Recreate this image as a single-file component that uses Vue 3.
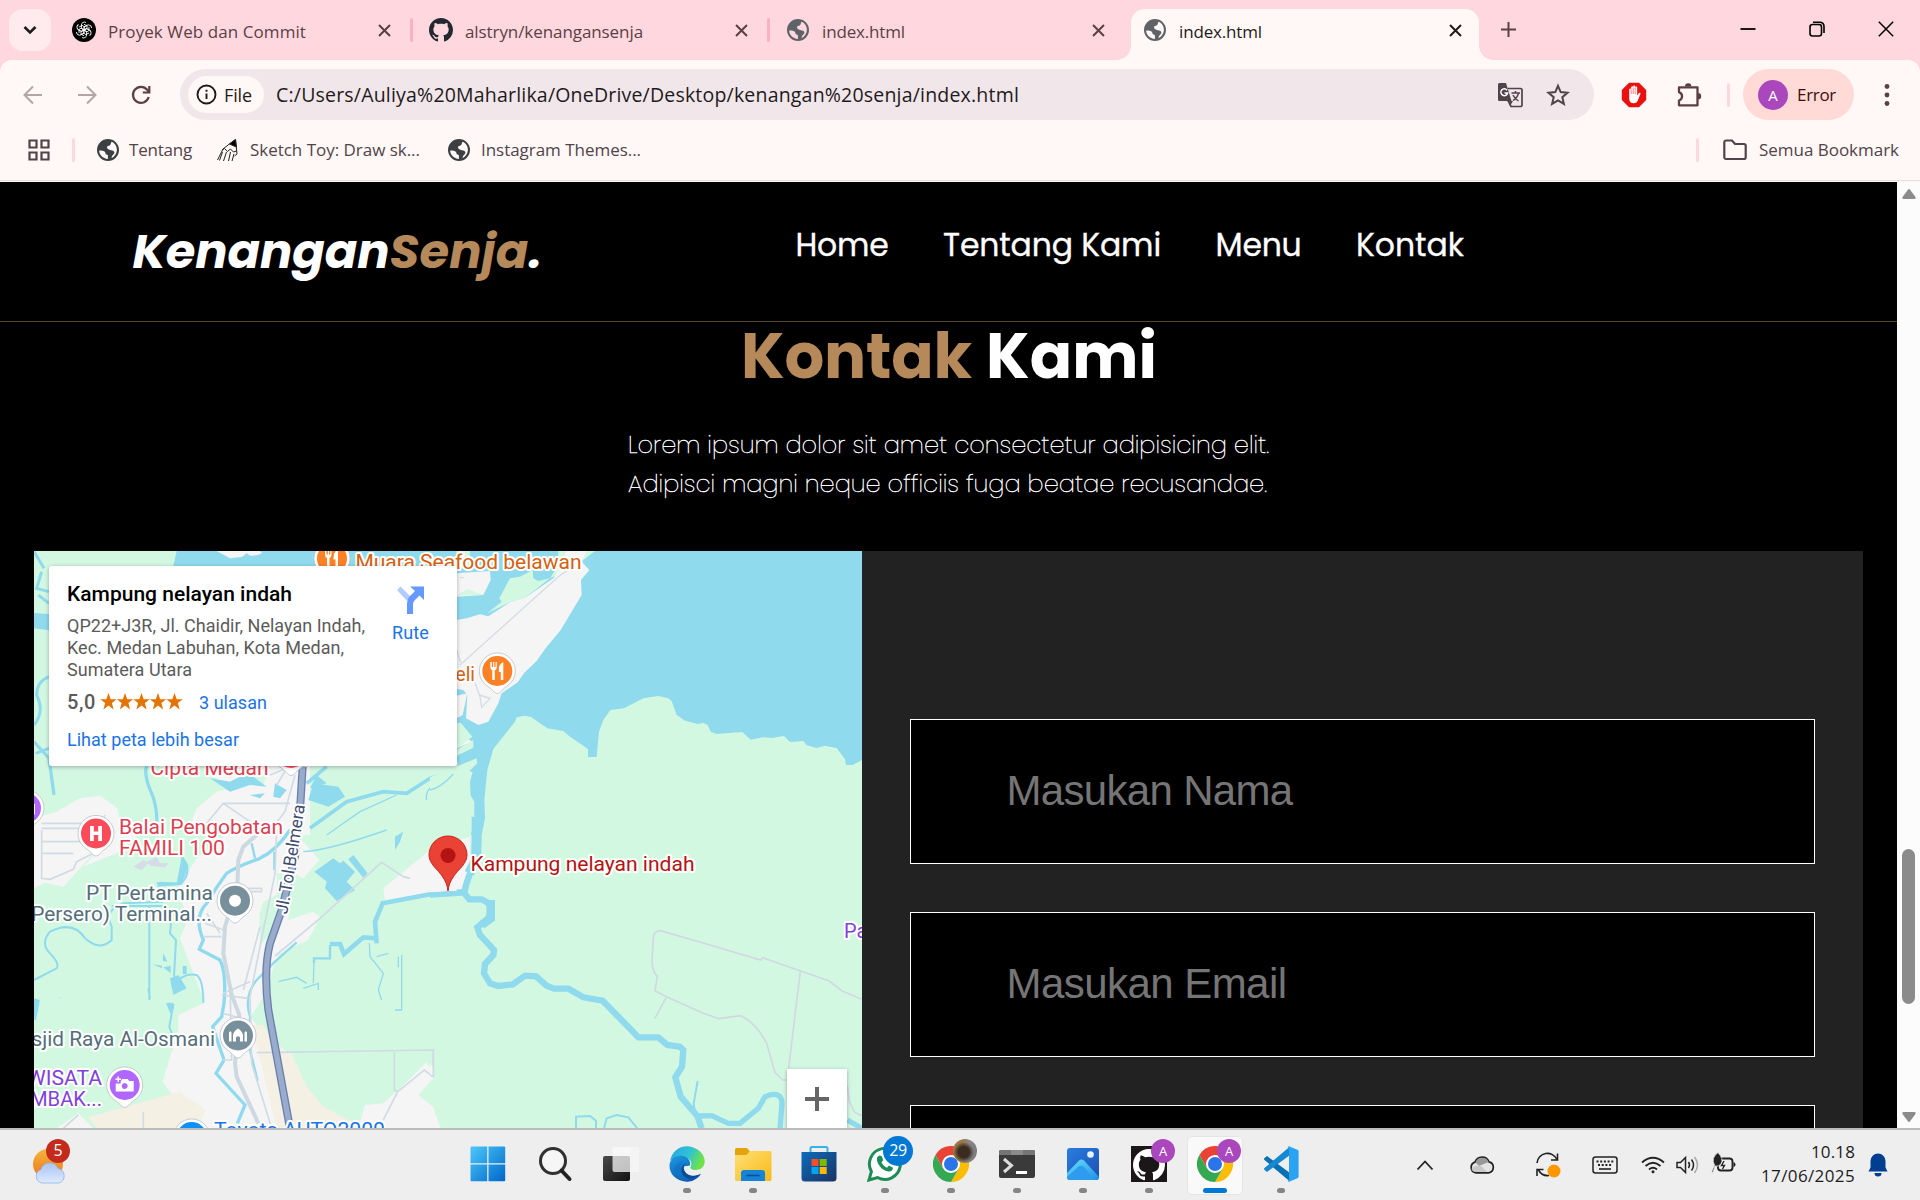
<script setup>
const tabs = [
  { icon: 'gpt', title: 'Proyek Web dan Commit', w: 198 },
  { icon: 'github', title: 'alstryn/kenangansenja', w: 178 },
  { icon: 'globe', title: 'index.html', w: 83 },
  { icon: 'globe', title: 'index.html', w: 83, active: true },
]

const links = [
  { label: 'Home', w: 93 },
  { label: 'Tentang Kami', w: 218 },
  { label: 'Menu', w: 86 },
  { label: 'Kontak', w: 108 },
]

const fields = ['Masukan Nama', 'Masukan Email', 'Masukan No HP']
const fieldWidths = [286, 280, 302]

const pins = [
  { x: 332, y: 558.5, color: '#ff8126', kind: 'food' },
  { x: 497.3, y: 671, color: '#ff8126', kind: 'food' },
  { x: 291, y: 753, color: '#fb4a59', kind: 'hospital' },
  { x: 26, y: 808, color: '#b066ff', kind: 'camera' },
  { x: 96, y: 833.5, color: '#fb4a59', kind: 'hospital' },
  { x: 235, y: 900.7, color: '#78909c', kind: 'dot' },
  { x: 238, y: 1035.5, color: '#78909c', kind: 'mosque' },
  { x: 124.7, y: 1085, color: '#b066ff', kind: 'camera' },
  { x: 191.7, y: 1137, color: '#0b90ff', kind: 'dot' },
]

const labels = [
  { t: 'Muara Seafood belawan', x: 355.5, y: 568.5, w: 226, c: '#d5610f' },
  { t: 'Deli', x: 443, y: 680.5, w: 32, c: '#d5610f' },
  { t: 'Cipta Medan', x: 150.5, y: 775, w: 118, c: '#dd3f51' },
  { t: 'Balai Pengobatan', x: 119, y: 833.5, w: 164, c: '#dd3f51' },
  { t: 'FAMILI 100', x: 119, y: 854.5, w: 106, c: '#dd3f51' },
  { t: 'PT Pertamina', x: 86, y: 900, w: 127, c: '#546e7a' },
  { t: '(Persero) Terminal...', x: 24, y: 921, w: 188, c: '#546e7a' },
  { t: 'Masjid Raya Al-Osmani', x: 2, y: 1045.5, w: 213, c: '#546e7a' },
  { t: 'WISATA', x: 27, y: 1085, w: 75, c: '#8241d8' },
  { t: 'MBAK...', x: 30, y: 1106, w: 72, c: '#8241d8' },
  { t: 'Toyota AUTO2000', x: 214, y: 1136.5, w: 171, c: '#1a73e8' },
  { t: 'Kampung nelayan indah', x: 470.5, y: 871, w: 224, c: '#b31412' },
  { t: 'Paluh', x: 844, y: 937.5, w: 50, c: '#8241d8' },
]

const apps = [
  { id: 'windows' },
  { id: 'search' },
  { id: 'taskview' },
  { id: 'edge', open: true },
  { id: 'explorer', open: true },
  { id: 'store' },
  { id: 'whatsapp', open: true, count: '29' },
  { id: 'chrome', open: true, badge: 'photo' },
  { id: 'terminal', open: true },
  { id: 'photos', open: true },
  { id: 'ghdesk', open: true, badge: 'A' },
  { id: 'chrome', active: true, badge: 'A' },
  { id: 'vscode', open: true },
]

const githubPath =
  'M8 0C3.58 0 0 3.58 0 8c0 3.54 2.29 6.53 5.47 7.59.4.07.55-.17.55-.38 0-.19-.01-.82-.01-1.49-2.01.37-2.53-.49-2.69-.94-.09-.23-.48-.94-.82-1.13-.28-.15-.68-.52-.01-.53.63-.01 1.08.58 1.23.82.72 1.21 1.87.87 2.33.66.07-.52.28-.87.51-1.07-1.78-.2-3.64-.89-3.64-3.95 0-.87.31-1.59.82-2.15-.08-.2-.36-1.02.08-2.12 0 0 .67-.21 2.2.82.64-.18 1.32-.27 2-.27s1.36.09 2 .27c1.53-1.04 2.2-.82 2.2-.82.44 1.1.16 1.92.08 2.12.51.56.82 1.27.82 2.15 0 3.07-1.87 3.75-3.65 3.95.29.25.54.73.54 1.48 0 1.07-.01 1.93-.01 2.2 0 .21.15.46.55.38A8.01 8.01 0 0 0 16 8c0-4.42-3.58-8-8-8z'
const globePath =
  'M12 1a11 11 0 1 0 0 22 11 11 0 0 0 0-22zM3.2 12.5c2.6 0 5 .1 5.8 1.4.7 1.100.1 2.300 1.600 2.600.9.2 1.400.5 1.300 1.700v2.700C6.900 20.600 3.300 17 3.200 12.500zM15.500 20.200c.5-1.200.2-2.300 1.200-3 1.300-.9 2.300-2.200 1.300-3.600-1-1.500-2.600-1-4-1.600-1.500-.7-3-1-3-2.700 0-1.400 1.600-1.500 2.600-1.900 1.400-.5.9-2 1.900-3.600 3.400 1.400 5.500 4.600 5.400 8.300-.1 3.600-2.300 6.600-5.400 8.100z'

/* Spreads the letters so that a line of text takes up the given width. */
const vFit = {
  mounted(el, { value }) {
    const n = el.textContent.length
    el.style.letterSpacing = `${(value - el.getBoundingClientRect().width) / n}px`
  },
}
</script>

<template>
  <div class="screen">
    <svg width="0" height="0" class="defs">
      <defs>
        <linearGradient id="gWin" x1="0" y1="0" x2="1" y2="1"><stop offset="0" stop-color="#4cc8fb" /><stop offset="1" stop-color="#0067c8" /></linearGradient>
        <linearGradient id="gEdgeA" x1="0" y1="0" x2="1" y2=".3"><stop offset="0" stop-color="#2aa5e0" /><stop offset=".6" stop-color="#30c3d3" /><stop offset="1" stop-color="#6fe24a" /></linearGradient>
        <linearGradient id="gEdgeB" x1="0" y1="0" x2=".6" y2="1"><stop offset="0" stop-color="#1b9de2" /><stop offset="1" stop-color="#0b56b0" /></linearGradient>
        <linearGradient id="gFolder" x1="0" y1="0" x2="1" y2="1"><stop offset="0" stop-color="#ffe076" /><stop offset="1" stop-color="#f9b917" /></linearGradient>
        <linearGradient id="gStore" x1="0" y1="0" x2="1" y2="1"><stop offset="0" stop-color="#0b6cbd" /><stop offset="1" stop-color="#1b3263" /></linearGradient>
        <linearGradient id="gPhoto" x1="0" y1="0" x2="1" y2="1"><stop offset="0" stop-color="#2a7de1" /><stop offset="1" stop-color="#1d4fb0" /></linearGradient>
        <linearGradient id="gHill" x1="0" y1="0" x2="1" y2="1"><stop offset="0" stop-color="#67e2fb" /><stop offset="1" stop-color="#1b8fe6" /></linearGradient>
        <linearGradient id="gSun" x1="0" y1="0" x2="0" y2="1"><stop offset="0" stop-color="#f4b63c" /><stop offset="1" stop-color="#f0731a" /></linearGradient>
        <linearGradient id="gCloud" x1="0" y1="0" x2="0" y2="1"><stop offset="0" stop-color="#a9c4f5" /><stop offset="1" stop-color="#dfeaff" /></linearGradient>
        <linearGradient id="gDark" x1="0" y1="0" x2="1" y2="1"><stop offset="0" stop-color="#4a4a4a" /><stop offset="1" stop-color="#111" /></linearGradient>
      </defs>
    </svg>

    <header class="chrome">
      <div class="strip">
        <div class="search-tabs">
          <svg width="14" height="10" viewBox="0 0 14 10"><path d="M1.500 2l5.500 5.500L12.500 2" fill="none" stroke="#1f1a1b" stroke-width="2.600" /></svg>
        </div>
        <div v-for="(t, i) in tabs" :key="i" class="tab" :class="{ active: t.active, bar: i < 2 }">
          <svg v-if="t.icon === 'gpt'" width="24" height="24" viewBox="-12 -12 24 24">
            <circle r="12" fill="#000" />
            <g fill="none" stroke="#fff" stroke-width=".9">
              <path v-for="k in 6" :key="k" :transform="`rotate(${k * 60})`" d="M-2.600-1.500V-5a3 3 0 0 1 4.600-2.500M-2.600-1.500L.2.100 3-1.500V-4L-.1-5.800" />
            </g>
          </svg>
          <svg v-else-if="t.icon === 'github'" width="24" height="24" viewBox="0 0 16 16"><path :d="githubPath" fill="#24292f" /></svg>
          <svg v-else width="24" height="24" viewBox="0 0 24 24"><path :d="globePath" fill="#5f6368" fill-rule="evenodd" /></svg>
          <span class="title"><span v-fit="t.w">{{ t.title }}</span></span>
          <svg class="x" width="13" height="13" viewBox="0 0 13 13"><path d="M1 1l11 11M12 1L1 12" stroke="currentColor" stroke-width="2" /></svg>
        </div>
        <svg class="plus" width="17" height="17" viewBox="0 0 17 17"><path d="M8.500 1v15M1 8.500h15" stroke="#5b3f44" stroke-width="2" /></svg>
        <div class="window">
          <svg width="16" height="16" viewBox="0 0 16 16"><path d="M.5 8h15" stroke="#000" stroke-width="1.800" /></svg>
          <svg width="16" height="16" viewBox="0 0 16 16" fill="none" stroke="#000" stroke-width="1.600"><rect x="1" y="3.500" width="11.500" height="11.500" rx="2.500" /><path d="M4 1.200h7a4 4 0 0 1 4 4V12" /></svg>
          <svg width="16" height="16" viewBox="0 0 16 16"><path d="M.8.8l14.400 14.400M15.200.8L.8 15.200" stroke="#000" stroke-width="1.500" /></svg>
        </div>
      </div>

      <div class="toolbar">
        <div class="nav-btns">
          <svg width="20" height="20" viewBox="0 0 20 20" fill="none" stroke="#b3a5a7" stroke-width="2"><path d="M19 10H2M10 1.500L1.500 10l8.500 8.500" /></svg>
          <svg width="20" height="20" viewBox="0 0 20 20" fill="none" stroke="#b3a5a7" stroke-width="2"><path d="M1 10h17M10 1.500l8.500 8.500-8.500 8.500" /></svg>
          <svg width="20" height="20" viewBox="0 0 20 20" fill="none" stroke="#5b3f44" stroke-width="2.200"><path d="M17.700 12a8 8 0 1 1-1.500-7.200L18 6.800" /><path d="M18.300 1v6.500h-6.500" /></svg>
        </div>
        <div class="omnibox">
          <div class="chip">
            <svg width="21" height="21" viewBox="0 0 21 21" fill="none" stroke="#1f1a1b" stroke-width="1.900"><circle cx="10.500" cy="10.500" r="9" /><path d="M10.500 9.500v5.500M10.500 5.800v2" /></svg>
            <span v-fit="28">File</span>
          </div>
          <span class="url"><span v-fit="743">C:/Users/Auliya%20Maharlika/OneDrive/Desktop/kenangan%20senja/index.html</span></span>
          <svg width="26" height="26" viewBox="0 0 26 26">
            <path d="M11 6.500h12.500a1.500 1.500 0 0 1 1.500 1.500v15a1.500 1.500 0 0 1-1.500 1.500H14l-3-6" fill="none" stroke="#51434a" stroke-width="1.700" />
            <path d="M2.500 1H9l5.500 18H2.500A1.500 1.500 0 0 1 1 17.500v-15A1.500 1.500 0 0 1 2.500 1zM12 19h4l-3 5z" fill="#51434a" />
            <path d="M10 8.200A3.400 3.400 0 1 0 10.600 11H7.500" fill="none" stroke="#fff" stroke-width="1.500" />
            <path d="M14.500 11H23M18.500 9v2M21.500 11c-.8 3.500-3 6-5.500 7.500M16 13c1 2.500 3 4.500 5.500 6" fill="none" stroke="#51434a" stroke-width="1.400" />
          </svg>
          <svg class="star" width="24" height="24" viewBox="0 0 24 24"><path d="M12 2.800l2.700 6.300 6.800.6-5.200 4.500 1.600 6.700-5.900-3.600-5.900 3.600 1.600-6.700-5.200-4.500 6.800-.6z" fill="none" stroke="#51434a" stroke-width="2" /></svg>
        </div>
        <svg class="ublock" width="26" height="26" viewBox="0 0 26 26">
          <path d="M8 .8h10L25.200 8v10L18 25.200H8L.8 18V8z" fill="#e8110f" />
          <path d="M8.200 13V7.500a1 1 0 0 1 2 0V5.300a1 1 0 0 1 2 0V4.500a1 1 0 0 1 2 0v1a1 1 0 0 1 2 0v8l1.500-2.300c.8-1 2.200-.4 1.700.7l-2.500 6.300c-.8 2-2 3-4.200 3-3 0-4.500-2-4.500-4.500z" fill="#fff" />
          <path d="M10.200 7.500V12M12.200 5.500V12M14.200 5.500V12" stroke="#e8110f" stroke-width=".5" />
        </svg>
        <svg class="puzzle" width="26" height="26" viewBox="0 0 26 26"><path d="M3 5.300h18.500v18H3v-4.800a4.400 4.400 0 0 0 0-8.400z" fill="none" stroke="#5b3f44" stroke-width="2.300" stroke-linejoin="round" /><path d="M9 4.500a3.200 3.200 0 0 1 6.400 0zM22 11a3.200 3.200 0 0 1 0 6.400z" fill="#5b3f44" /></svg>
        <i class="sep"></i>
        <div class="profile"><b>A</b><span v-fit="39">Error</span></div>
        <svg class="kebab" width="6" height="26" viewBox="0 0 6 26" fill="#5b3f44"><circle cx="3" cy="4.500" r="2.400" /><circle cx="3" cy="13" r="2.400" /><circle cx="3" cy="21.500" r="2.400" /></svg>
      </div>

      <div class="bookmarks">
        <svg class="apps" width="22" height="22" viewBox="0 0 22 22" fill="none" stroke="#51434a" stroke-width="2.200"><path d="M1.500 1.500h7v7h-7zM13.500 1.500h7v7h-7zM1.500 13.500h7v7h-7zM13.500 13.500h7v7h-7z" /></svg>
        <i class="sep"></i>
        <div class="bm b1"><svg width="24" height="24" viewBox="0 0 24 24"><path :d="globePath" fill="#3c4043" fill-rule="evenodd" /></svg><span v-fit="63">Tentang</span></div>
        <div class="bm b2">
          <svg width="24" height="24" viewBox="0 0 24 24" fill="none" stroke="#222" stroke-width="1"><path d="M19.500 1.500l1.500 14.500L18.500 18M18.500 2L7 11 1.500 22M6 12l2.500-1.500 3 3 3-2.500 3 3 3-1M6.500 14L3.500 22.500M10.500 14L7.500 23M14.500 14l-2 9M18 16l-2 7" /><path d="M19.500 1.500l.8 7.500-6.800-3z" fill="#000" /></svg>
          <span v-fit="170">Sketch Toy: Draw sk...</span>
        </div>
        <div class="bm b3"><svg width="24" height="24" viewBox="0 0 24 24"><path :d="globePath" fill="#3c4043" fill-rule="evenodd" /></svg><span v-fit="160">Instagram Themes...</span></div>
        <i class="sep right"></i>
        <div class="bm b4"><svg width="24" height="22" viewBox="0 0 24 22"><path d="M3 1.500h6l3 3.500h9a1.700 1.700 0 0 1 1.700 1.700v11.600A1.700 1.700 0 0 1 21 20H3a1.700 1.700 0 0 1-1.700-1.700V3.200A1.700 1.700 0 0 1 3 1.500z" fill="none" stroke="#51434a" stroke-width="2.200" /></svg><span v-fit="140">Semua Bookmark</span></div>
      </div>
    </header>

    <div class="view">
      <main class="page">
        <nav class="navbar">
          <a class="logo"><span v-fit="257">Kenangan</span><em v-fit="139">Senja</em><span>.</span></a>
          <div class="links"><a v-for="l in links" :key="l.label"><span v-fit="l.w">{{ l.label }}</span></a></div>
        </nav>
        <section class="contact">
          <h2><em v-fit="231">Kontak</em><span v-fit="171">Kami</span></h2>
          <p><span v-fit="641">Lorem ipsum dolor sit amet consectetur adipisicing elit.</span><br /><span v-fit="639">Adipisci magni neque officiis fuga beatae recusandae.</span></p>
          <div class="row">
            <div class="map">
              <svg width="828" height="577" viewBox="34 551 828 577">
                <rect x="34" y="551" width="828" height="577" fill="#d3f8e2" />
                <!-- north-west -->
                <g transform="translate(30 545) scale(.33333)">
                  <path d="M440 18H1320V663L1281 600V63H430zM12 204L57 207V256L12 250z" fill="#90daee" />
                  <path d="M560 18H690L700 28L600 40zM1281 80L1320 95V150L1281 155zM1281 235L1320 220V430L1290 400L1281 380z" fill="#f5f5f5" />
                  <path d="M620 55l30-25 20 12 30-15M12 20l30 50M35 80l-15 50 37 10M25 150l32 25M57 395Q20 410 20 450Q45 500 12 540M12 590L57 640M57 610l-40 15" stroke="#90daee" stroke-width="9" fill="none" />
                  <path d="M1281 560l39-30v40l-39 30zM1281 460l39 20" fill="#d3f8e2" />
                  <path d="M350 663Q340 690 365 745Q385 790 380 870M57 640l15 110" stroke="#90daee" stroke-width="10" fill="none" />
                  <path d="M545 690L640 690L700 720L720 663H840V870H470L500 790L560 740L600 730zM12 820L80 800L150 760L210 752L262 790L270 830L330 870H12z" fill="#f5f5f5" />
                  <path d="M540 700l60 10 40-20 30 5 40 30-50-5-60 20zM735 715l35 20-20 25-20-5zM690 760l-30-10 45-5zM850 715l75 10 20 30-50 30-60-20zM860 690l30 25-50 15z" fill="#90daee" />
                  <path d="M840 850L950 770L1060 740L1130 745L1200 700L1320 663M830 715L890 665" stroke="#90daee" stroke-width="11" fill="none" />
                  <path d="M890 870L990 800L1100 750M1250 690Q1180 730 1190 765" stroke="#90daee" stroke-width="4" fill="none" />
                  <path d="M580 775H780M580 775L500 870M580 775L660 830M795 690L765 800L710 870M720 690L770 670L740 720M35 835H160M35 850H150M35 865H140M225 810l-20 50" stroke="#d0dbe3" stroke-width="5" fill="none" />
                </g>
                <!-- north-east -->
                <g transform="translate(430 545) scale(.33333)">
                  <path d="M80 18H1296V870H123L80 640z" fill="#90daee" />
                  <path d="M80 18H120V70H80zM385 18H495L440 60L360 100L285 158L240 172L172 205L215 170L208 160L240 100L270 95L308 75L310 100L325 108L360 100L385 60z" fill="#d3f8e2" />
                  <path d="M80 85L180 78L182 105L160 150L80 155zM410 18H470L455 50L478 75L453 105L455 150L392 255L345 312L320 348L283 383L263 412L215 445L205 475L175 530L145 540L108 520L112 450L100 435L80 432V225L110 220L150 208L175 214L240 172L285 158L370 100L395 60z" fill="#f5f5f5" />
                  <path d="M80 152L112 132L160 150z" fill="#d3f8e2" />
                  <path d="M90 98H102M90 360L385 95L420 70M130 400L150 455L155 487L180 460L148 450M80 315L92 352" stroke="#d4dce6" stroke-width="4" fill="none" />
                  <path d="M80 452L112 445L98 510L80 520zM80 560L127 590L80 610z" fill="#f5f5f5" />
                  <path d="M155 870L165 820L163 765L172 675L190 612L255 530L260 517L285 512L303 516L352 550L400 558L420 575L474 612V636H500L507 560L520 525L541 495L582 490L640 460L685 453L715 460L725 468L740 510L765 527L803 537L820 534L833 540L842 560L860 567L937 561L962 584L1000 577L1025 579L1062 573L1080 591L1120 588L1130 601L1160 609L1185 602L1220 609L1245 643L1248 660H1268L1296 645V870zM80 533H92L127 575L88 605L80 600zM130 585V608L80 632V615zM0 697L140 640L142 655L118 678L128 682L120 710L122 752L133 770V815L123 870H0z" fill="#d3f8e2" />
                  <path d="M0 735Q30 730 70 687" stroke="#90daee" stroke-width="4" fill="none" />
                </g>
                <!-- south-west -->
                <g transform="translate(30 830) scale(.33333)">
                  <path d="M12 0H260L200 60L100 170L45 158L12 175zM260 0H340L270 65L160 110zM500 85L600 0H790L868 90L820 145L790 130L775 200V270L850 245L870 262L835 330L745 372L700 500L662 560L690 600L760 895H500L398 755L445 600V555L525 518L490 430L450 325L475 265L440 180zM1060 175L1200 60L1320 20V100L1290 185L1200 190L1065 210zM1190 697L1213 740L1165 795L1210 832L1232 895H985L1005 825L1060 820L1105 780zM80 895L145 850L190 895z" fill="#f5f5f5" />
                  <path d="M770 130L745 290L690 345L688 255L700 215L740 195V130z" fill="#d3f8e2" />
                  <path d="M175 862L450 785L528 840L500 895H200zM665 585H700L735 640L785 672L830 770L880 830L960 872L1000 895H740z" fill="#f5f0e4" />
                  <path d="M780 0Q740 60 690 85Q620 110 590 130Q560 170 530 220Q490 260 520 330L508 358L570 390Q590 430 582 520L575 560L548 590L582 690L558 730L645 825L622 880" stroke="#90daee" stroke-width="10" fill="none" />
                  <path d="M665 40L675 85M733 65V120M800 337L735 395L680 450Q640 500 660 560V660L683 752" stroke="#90daee" stroke-width="7" fill="none" />
                  <path d="M455 80Q490 120 455 160H380M12 450L80 415Q90 400 60 370Q30 340 60 305Q130 270 165 325Q210 365 245 330V290Q220 240 280 220L400 215M425 260L420 310L438 330L432 440M425 470Q460 425 500 435Q520 450 520 518M358 230V510M355 475l5 30M415 520L430 525L418 590L425 610M12 515L25 520L15 570M245 228H400" stroke="#90daee" stroke-width="6" fill="none" />
                  <path d="M455 80l20 25-20 60-75 5 10-15 50 5zM420 445l25-10 25 40-40 20zM408 520l22-2-8 35zM400 370l12 25-14-3zM366 402l30 5v8zM458 408h12v24h-12zM400 412l22-4v22zM12 505l18 5-18 55z" fill="#90daee" />
                  <path d="M853 125L910 85L930 100L940 92L975 125L950 155L975 180L920 213L885 175L890 155zM955 88L970 75L1013 130L1000 143zM1095 20l25-15-10 30-15 25z" fill="#90daee" />
                  <path d="M820 475l45-15v20M852 385L850 460M1018 340L1020 380L1060 430L1045 480L1055 510M1115 375V540H1095M1105 380V412M745 455L800 442L830 460M1040 380L1075 370M820 65Q900 60 1070 0" stroke="#90daee" stroke-width="4" fill="none" />
                  <path d="M1288 189L1200 193L1058 220L1035 275L1040 340M1040 325L1000 322L942 372L930 342L900 342" stroke="#90daee" stroke-width="14" fill="none" />
                  <path d="M900 345V385H852V400" stroke="#90daee" stroke-width="7" fill="none" />
                  <path d="M870 265L1055 97L1120 140L1140 145M735 378L870 265M580 490L660 455M575 495L655 505M580 550L650 570M680 668L1210 660V740L1183 720L1103 785L1060 870M1093 665V780L1103 785M690 290L640 480M740 0L735 130L700 300L660 500L665 700L725 895M600 460L605 690H580M35 0V145L60 148L130 118L140 95L190 70M35 35H160M35 70H130M530 250L570 310M525 280L580 300M520 320H575M610 175H695V185H620M100 895L145 855M340 845V895" stroke="#d0dbe3" stroke-width="5" fill="none" />
                  <path d="M310 110l30-20 15 10-20 20zM350 95l30-15 10 20h25l-10 12-45-5zM80 503q10-4 18 2" fill="#d6dbe8" />
                  <path d="M680 15L640 50L625 90L622 170L585 290L580 370L605 495L628 555L615 700L620 740L685 880" stroke="#ccd9e1" stroke-width="12" fill="none" />
                  <path d="M818-190L810-60L795 80L755 240L720 340Q700 420 715 540L780 895" stroke="#6b7fae" stroke-width="24" fill="none" />
                  <path d="M818-190L810-60L795 80L755 240L720 340Q700 420 715 540L780 895" stroke="#9aaccb" stroke-width="16" fill="none" />
                </g>
                <!-- south-east -->
                <g transform="translate(430 830) scale(.33333)">
                  <path d="M0 830L10 838L28 895H0zM0 105L90 90L110 130L75 180L0 190zM0 700L12 715V745L0 752z" fill="#f5f5f5" />
                  <path d="M0 660H10V740L0 735" fill="none" stroke="#d0dbe3" stroke-width="5" />
                  <path d="M0 195L88 190V178" stroke="#90daee" stroke-width="16" fill="none" />
                  <path d="M140-40V30L138 90L118 130" stroke="#90daee" stroke-width="30" fill="none" />
                  <path d="M122 125L108 165L103 190L118 208H155L180 222L182 250L172 268L142 292L150 315L192 360L190 375L165 402L162 430L180 460L205 468L248 463L285 437L318 439L350 467L372 476H415L460 502L518 512L602 598L625 622H685L712 645L750 650L760 660L756 710L736 742L752 800L802 858L815 895" stroke="#90daee" stroke-width="19" fill="none" />
                  <path d="M182 210V265L155 285" stroke="#90daee" stroke-width="26" fill="none" />
                  <path d="M802 858L845 857L895 880H930L985 835L1005 800Q1055 780 1056 820L1050 895M1252 870L1296 895" stroke="#90daee" stroke-width="16" fill="none" />
                  <path d="M803 753L791 820L795 850M438 895V860L480 858L498 872V895M522 895L530 865L560 855L595 862L622 895" stroke="#90daee" stroke-width="6" fill="none" />
                  <path d="M1296 508L1235 482L1198 453L1112 423L998 383L992 390L850 348L692 302Q670 304 670 322L666 395Q668 425 682 440L675 482L710 500L820 550L866 566L932 557Q980 580 1010 640L1035 728L1058 750H1072M710 500L674 566M1111 425L1098 530L1076 715M1252 765L1258 815L1275 848L1296 857" stroke="#d2d8e3" stroke-width="5" fill="none" />
                </g>

                <path id="toll" d="M287 915Q292 888 296 863L306 798" fill="none" />
                <text class="lbl road" textLength="111" lengthAdjust="spacing"><textPath href="#toll">Jl. Tol Belmera</textPath></text>

                <g v-for="(p, i) in pins" :key="i" :transform="`translate(${p.x} ${p.y})`">
                  <path d="M0 22.500C-3 22.500-5 18-11.500 13.800A18 18 0 1 1 11.500 13.800C5 18 3 22.500 0 22.500z" fill="#fff" stroke="#b9bfc6" stroke-width=".8" />
                  <circle r="15" :fill="p.color" />
                  <path v-if="p.kind === 'food'" d="M-7-9v5q0 3 2 3.500V9h2.500V-.5q2-.5 2-3.500v-5h-1.200v5h-1.300v-5h-1.200v5h-1.300v-5zM6-9Q1-7 1.500 1H3.500V9H6z" fill="#fff" />
                  <path v-else-if="p.kind === 'hospital'" d="M-6-7.500h3.800v5.600h4.400v-5.600H6v15H2.200V1.600h-4.400v5.900H-6z" fill="#fff" />
                  <circle v-else-if="p.kind === 'dot'" r="6" fill="#fff" />
                  <path v-else-if="p.kind === 'mosque'" d="M-9 6V-3l1.300-1.500L-6.500-3V6zM9 6V-3L7.700-4.500 6.500-3V6zM-5 6V-.5Q-4-5 0-7Q4-5 5-.5V6H2V2Q0-.5-2 2V6z" fill="#fff" />
                  <path v-else d="M-4-3.500L-2.500-6H3L4.500-4H9V6.500H-9V-1.500H-4zM0-2a3 3 0 1 0 .01 0zM-7.200-8.500h1.500v2h2v1.500h-2v2h-1.500v-2h-2v-1.500h2z" fill="#fff" fill-rule="evenodd" />
                </g>

                <text v-for="l in labels" :key="l.t" class="lbl" :x="l.x" :y="l.y" :fill="l.c" :textLength="l.w" lengthAdjust="spacingAndGlyphs">{{ l.t }}</text>

                <path d="M448 891C447 880 440 873 434 866.500C430.500 862 429 858.500 429 855a19 19 0 1 1 38 0C467 858.500 465.500 862 462 866.500C456 873 449 880 448 891z" fill="#ea4335" stroke="#c5221f" stroke-width="1" />
                <circle cx="448" cy="855.500" r="7.500" fill="#b31412" />
              </svg>

              <div class="card">
                <div class="info">
                  <strong><span v-fit="225">Kampung nelayan indah</span></strong>
                  <div class="addr"><span v-fit="298">QP22+J3R, Jl. Chaidir, Nelayan Indah,</span><br /><span v-fit="277">Kec. Medan Labuhan, Kota Medan,</span><br /><span v-fit="125">Sumatera Utara</span></div>
                  <div class="rate">
                    <span class="score" v-fit="29">5,0</span>
                    <svg width="83" height="18" viewBox="0 0 83 18"><path v-for="k in 5" :key="k" :transform="`translate(${(k - 1) * 16.500} 0)`" d="M8.500 0l2.200 6.200h6L11.900 10l1.700 6.500-5.100-4-5.100 4L5.100 10 .3 6.200h6z" fill="#e37400" /></svg>
                    <a v-fit="68">3 ulasan</a>
                  </div>
                  <a class="bigger"><span v-fit="172">Lihat peta lebih besar</span></a>
                </div>
                <div class="route">
                  <svg width="27" height="28" viewBox="0 0 27 28"><path d="M0 4l3.500-3.500L14 11l-4 4z" fill="#b3ccff" /><path d="M10 28V17q0-4 3-7l5-5-5-4.500H27V14l-4.500-4.500-5 5Q16 16 16 18v10z" fill="#6699ff" /></svg>
                  <span v-fit="37">Rute</span>
                </div>
              </div>
              <div class="zoom"><i></i></div>
            </div>
            <form class="form">
              <div v-for="(f, i) in fields" :key="f" class="field"><span v-fit="fieldWidths[i]">{{ f }}</span></div>
            </form>
          </div>
        </section>
      </main>
      <aside class="scroll">
        <svg width="16" height="12" viewBox="0 0 16 12"><path d="M8 1q1 0 2 2l4.500 6q.8 2-1 2h-11q-1.800 0-1-2L6 3q1-2 2-2z" fill="#8b8b8b" /></svg>
        <i class="thumb"></i>
        <svg width="16" height="12" viewBox="0 0 16 12"><path d="M8 11q1 0 2-2l4.500-6q.8-2-1-2h-11q-1.800 0-1 2L6 9q1 2 2 2z" fill="#8b8b8b" /></svg>
      </aside>
    </div>

    <footer class="taskbar">
      <div class="weather">
        <svg width="38" height="40" viewBox="0 0 38 40"><circle cx="16" cy="18" r="15" fill="url(#gSun)" /><path d="M10 37a7 7 0 0 1-1-13.500 9 9 0 0 1 17-1A7.500 7.500 0 0 1 27 37z" fill="url(#gCloud)" stroke="#8fb0ea" stroke-width=".8" /></svg>
        <b>5</b>
      </div>
      <div class="apps-row">
        <div v-for="(a, i) in apps" :key="i" class="app" :class="{ active: a.active }">
          <div class="ic">
            <svg v-if="a.id === 'windows'" class="start" width="36" height="36" viewBox="0 0 36 36" fill="url(#gWin)"><path d="M.5 1.500a1 1 0 0 1 1-1h15.700v16.700H.5zM18.500.5h15.700a1 1 0 0 1 1 1v15.700H18.500zM.5 18.500h16.700v16.700H1.500a1 1 0 0 1-1-1zM18.500 18.500h16.700v15.700a1 1 0 0 1-1 1H18.500z" /></svg>
            <svg v-else-if="a.id === 'search'" width="36" height="36" viewBox="0 0 36 36"><circle cx="16" cy="15" r="12.500" fill="#f6f6f6" stroke="#303030" stroke-width="3" /><path d="M24.500 24.500l8 8.500" stroke="#222" stroke-width="4" stroke-linecap="round" /></svg>
            <svg v-else-if="a.id === 'taskview'" width="36" height="36" viewBox="0 0 36 36"><rect x="0" y="10" width="27" height="25" rx="2" fill="url(#gDark)" /><rect x="9.500" y="1" width="26.500" height="25" rx="2" fill="#fafafa" opacity=".75" /><path d="M27 1.500h8.500v24H27z" fill="#f4f4f4" /></svg>
            <svg v-else-if="a.id === 'edge'" width="36" height="36" viewBox="0 0 36 36"><path d="M1 15C3 6 9.500.3 18 .3S35.700 7 35.700 15c0 6-4 9-9 9-4 0-6-1.500-5-3.500 2-4-.5-9-7-9C8 11.500 3 13 1 15z" fill="url(#gEdgeA)" /><path d="M.5 19C1 13 7 9 13.500 10c6 .8 8.500 5.500 7.500 9.500-4 1-7 0-7 3.500 0 6 7 10 18 5C28 33.500 23 35.800 18 35.700 8 35.500 0 28.500.5 19z" fill="url(#gEdgeB)" /><path d="M13.200 16c-4 5-1.500 15 7 17.500-6 2-15-.5-15-9 0-4.500 3.500-8 8-8.500z" fill="#1173c4" opacity=".7" /><path d="M16.500 17.500C13 21 15 28 22 29.500c4 .8 8-.5 10-2-5 5-12 7-17 2.500-4-4-3-10 1.500-12.500z" fill="#0c4a96" /></svg>
            <svg v-else-if="a.id === 'explorer'" width="38" height="36" viewBox="0 0 38 36"><path d="M1 3.500A1.500 1.500 0 0 1 2.500 2H13l3 3.500V14H1z" fill="#e3a30d" /><path d="M16 5h20a1.500 1.500 0 0 1 1.500 1.500v27A1.500 1.500 0 0 1 36 35H2.500A1.500 1.500 0 0 1 1 33.500V9h11.500z" fill="url(#gFolder)" /><path d="M7 35V27q0-3 3-3h18q3 0 3 3v8z" fill="#1583d8" /><path d="M12.500 29.500h13" stroke="#07508f" stroke-width="1.600" /></svg>
            <svg v-else-if="a.id === 'store'" width="36" height="36" viewBox="0 0 36 36"><path d="M9.500 9V2.500Q9.500 1 11 1h14q1.500 0 1.500 1.500V9" fill="none" stroke="#35b3e8" stroke-width="2" /><path d="M.5 6h35v26q0 3.500-3.500 3.500H4Q.5 35.500.5 32z" fill="url(#gStore)" /><path d="M10.500 13h7v7h-7z" fill="#f25022" /><path d="M18.700 13h7v7h-7z" fill="#7fba00" /><path d="M10.500 21h7v7h-7z" fill="#00a4ef" /><path d="M18.700 21h7v7h-7z" fill="#ffb900" /></svg>
            <svg v-else-if="a.id === 'whatsapp'" width="36" height="36" viewBox="0 0 36 36"><path d="M2 34l2.400-8.500A15.500 15.500 0 1 1 10.500 31.500z" fill="#fff" stroke="#1d8d57" stroke-width="3" /><path d="M12.500 9.500c-2 .5-3 2.500-2.500 5 1.500 6 6 10 11.500 11 2.500.3 4.500-1.500 4.500-3.800l-4-2.200-2 2.200c-2.500-1-4.500-3-5.500-5.500l1.800-2-1.700-4.300z" fill="#1d8d57" /></svg>
            <svg v-else-if="a.id === 'chrome'" width="36" height="36" viewBox="-18 -18 36 36"><path d="M-15.600-9A18 18 0 0 1 15.600-9H0L-7.800 4.500z" fill="#ea4335" /><path d="M15.600-9A18 18 0 0 1 0 18L7.800 4.500 0-9z" fill="#fbbc04" /><path d="M0 18A18 18 0 0 1-15.600-9L-7.800 4.500H7.800z" fill="#34a853" /><path d="M15.600-9H0V0H7.800z" fill="#fbbc04" /><circle r="9" fill="#fff" /><circle r="7" fill="#2a74ea" /></svg>
            <svg v-else-if="a.id === 'terminal'" width="38" height="36" viewBox="0 0 38 36"><rect x="1" y="4" width="36" height="28" rx="2" fill="#3a3a3a" /><path d="M1 6q0-2 2-2h32q2 0 2 2v3H1z" fill="#757575" /><path d="M13 4h12v5H13z" fill="#8c8c8c" /><path d="M6 13l7.500 6.500L6 26" stroke="#ddd" stroke-width="3" fill="none" /><path d="M18 26.500h11" stroke="#fff" stroke-width="3" /></svg>
            <svg v-else-if="a.id === 'photos'" width="36" height="36" viewBox="0 0 36 36"><rect x="2" y="2" width="32" height="32" rx="3" fill="url(#gPhoto)" /><path d="M2 30V27L14 14.500q2.500-2 5 0L34 31q0 3-3 3H5q-3 0-3-4z" fill="url(#gHill)" /><path d="M2 31L13 21q3-2.500 6 0l11 13H5q-3 0-3-3z" fill="#2e9bee" /><circle cx="25.500" cy="8.500" r="3.300" fill="#e5f4ff" /></svg>
            <svg v-else-if="a.id === 'ghdesk'" width="36" height="36" viewBox="0 0 36 36"><rect width="36" height="36" fill="#1b1718" /><g transform="translate(2 3) scale(2)"><path :d="githubPath" fill="#fff" /></g></svg>
            <svg v-else width="36" height="36" viewBox="0 0 36 36"><path d="M1 12.500l3-2.500L27 27v8.500L1.200 13.800z" fill="#0a70b5" /><path d="M1 23.500l3 2.500L27 9V.5L1.200 22.200z" fill="#1688cf" /><path d="M26 .3l9 3.700q.6.400.6 1.200v25.600q0 .8-.6 1.200l-9 3.700q-1 0-1.500-.7 1.500 0 1.500-2V3q0-2-1.500-2 .5-.7 1.500-.7z" fill="#2aa3f0" /></svg>
          </div>
          <b v-if="a.count" class="count">{{ a.count }}</b>
          <b v-if="a.badge" class="badge" :class="{ photo: a.badge === 'photo' }">{{ a.badge === 'A' ? 'A' : '' }}</b>
          <i v-if="a.open || a.active" class="run"></i>
        </div>
      </div>
      <div class="tray">
        <svg class="t1" width="18" height="12" viewBox="0 0 18 12"><path d="M1.500 10.500L9 2.500l7.500 8" fill="none" stroke="#222" stroke-width="1.800" /></svg>
        <svg class="t2" width="26" height="18" viewBox="0 0 26 18"><path d="M7 16.800a5.500 5.500 0 0 1-1-10.700A7.500 7.500 0 0 1 20 5.800 5.600 5.600 0 0 1 19.500 16.800z" fill="#e4e4e4" stroke="#222" stroke-width="1.700" /><path d="M6.500 6.500A7 7 0 0 1 19.500 6L10 10z" fill="#999" /><path d="M2.500 13q3-4 9-3.500l6.500 6.500H7q-3.500 0-4.500-3z" fill="#c8c8c8" /></svg>
        <svg class="t3" width="26" height="26" viewBox="0 0 26 26"><path d="M2 11A10.500 10.500 0 0 1 22 7.500M22.500 1.500V8H16M14 23.500A10.500 10.500 0 0 1 3.500 18M2 24V17.500h6.500" fill="none" stroke="#222" stroke-width="1.600" /><circle cx="19" cy="19" r="6.500" fill="#ff9800" /></svg>
        <svg class="t4" width="26" height="18" viewBox="0 0 26 18"><rect x="1" y="1" width="24" height="16" rx="2.500" fill="none" stroke="#222" stroke-width="1.500" /><path d="M4.500 5.500h17M6 9h14" stroke="#222" stroke-width="2" stroke-dasharray="2 1.700" /><path d="M7 13h12" stroke="#222" stroke-width="1.600" /></svg>
        <svg class="t5" width="24" height="18" viewBox="0 0 24 18" fill="none" stroke="#222" stroke-width="1.800"><path d="M1 6.500q11-9.500 22 0M4.500 10q7.500-6.500 15 0M8 13.500q4-3.500 8 0" /><circle cx="12" cy="15.800" r="1.500" fill="#222" stroke="none" /></svg>
        <svg class="t6" width="24" height="20" viewBox="0 0 24 20" fill="none" stroke="#222" stroke-width="1.500"><path d="M1 7.500h3.500L9.500 2.500v15l-5-5H1zM12.500 7q2 3 0 6M15.500 4.500q4 5.500 0 11" /><path d="M18.500 2q6 8 0 16" stroke="#aaa" /></svg>
        <svg class="t7" width="26" height="22" viewBox="0 0 26 22"><rect x="7" y="6.500" width="14.500" height="12" rx="3" fill="none" stroke="#222" stroke-width="1.900" /><path d="M22.500 10q2 .5 2 2.500t-2 2.500z" fill="#222" /><path d="M13 9l-2.500 4.500h3L11.500 17" fill="none" stroke="#222" stroke-width="1.400" /><path d="M7 .5q6 6.500 3 11.500-2.500 3-6 2L2 20.500l-1.300-.7L3.500 13Q-.5 6 7 .5z" fill="#222" stroke="#eee" stroke-width=".8" /></svg>
        <div class="clock"><span v-fit="44">10.18</span><br /><span v-fit="94">17/06/2025</span></div>
        <svg class="bell" width="20" height="24" viewBox="0 0 20 24"><path d="M10 .5a7.500 7.500 0 0 1 7.500 7.500v6.500l2 4H.5l2-4V8A7.500 7.500 0 0 1 10 .5zM6.500 20h7a3.500 3.500 0 0 1-7 0z" fill="#003e92" /></svg>
      </div>
    </footer>
  </div>
</template>

<style>
html, body { margin: 0; overflow: hidden; background: #000; }
</style>

<style scoped>
* { box-sizing: border-box; }
.screen { width: 1920px; height: 1200px; display: flex; flex-direction: column; overflow: hidden; font-family: "Segoe UI", "Open Sans", "Noto Sans", sans-serif; }
.screen span, .screen em, .screen a { white-space: nowrap; }
.defs { position: absolute; }
svg { display: block; flex: none; }

.chrome { height: 182px; flex: none; background: #fff8f6; font-size: 17px; border-bottom: 1px solid #fff8f6; box-shadow: inset 0 -1px #f9d7dc; }
.strip { height: 60px; background: #ffd8df; display: flex; align-items: flex-start; position: relative; }
.search-tabs { width: 42px; height: 42px; margin: 9px 3px 0 9px; border-radius: 14px; background: #ffeaed; display: flex; align-items: center; justify-content: center; }
.tab { width: 357px; height: 60px; display: flex; align-items: center; padding-left: 18px; position: relative; color: #5b3f44; }
.tab .title { display: block; width: 270px; margin: 4px 0 0 12px; line-height: 24px; }
.tab.active { color: #1f1a1b; z-index: 1; }
.tab.bar::after { content: ""; width: 3px; height: 24px; border-radius: 2px; background: #ffb1c0; position: absolute; right: -2px; top: 18px; }
.tab.active::before { content: ""; position: absolute; left: 6px; right: 3px; top: 9px; bottom: 0; background: #fff8f6; border-radius: 14px 14px 0 0; z-index: -1; }
.tab.active::after { content: ""; position: absolute; left: -8px; right: -11px; bottom: 0; height: 14px; z-index: -1; background: radial-gradient(circle at 0 0, transparent 13.500px, #fff8f6 14px) 0 0 / 14px 14px no-repeat, radial-gradient(circle at 100% 0, transparent 13.500px, #fff8f6 14px) 100% 0 / 14px 14px no-repeat; }
.plus { margin: 21px 0 0 18px; }
.window { display: flex; gap: 53px; margin: 21px 26px 0 auto; }
.toolbar { height: 69px; background: linear-gradient(#ffd8df, #ffd8df) 0 0 / 100% 12px no-repeat; position: relative; z-index: 0; display: flex; align-items: center; }
.toolbar::before { content: ""; position: absolute; inset: 0; background: #fff8f6; border-radius: 12px 12px 0 0; z-index: -1; }
.nav-btns { display: flex; gap: 34px; margin-left: 23px; width: 157px; }
.omnibox { width: 1414px; height: 51px; border-radius: 26px; background: #f1e6ea; display: flex; align-items: center; padding-left: 8px; color: #1f1a1b; }
.chip { width: 76px; height: 37px; border-radius: 19px; background: #fff8f6; display: flex; align-items: center; padding-left: 8px; gap: 7px; font-size: 18px; font-weight: 500; line-height: 24px; }
.url { width: 1221px; margin-left: 12px; font-size: 19.500px; line-height: 26px; }
.star { margin-left: 23px; }
.ublock { margin-left: 27px; }
.puzzle { margin-left: 29px; }
.sep { width: 3px; height: 24px; border-radius: 2px; background: #ffd8df; }
.toolbar .sep { margin-left: 25px; }
.profile { width: 111px; height: 51px; margin-left: 13px; border-radius: 26px; background: #ffdad6; display: flex; align-items: center; padding-left: 15px; gap: 9px; color: #410e0b; }
.profile b { width: 30px; height: 30px; border-radius: 50%; background: #ab47bc; color: #fff; font-size: 15px; font-weight: 400; display: flex; align-items: center; justify-content: center; }
.kebab { margin-left: 30px; }
.bookmarks { height: 42px; display: flex; align-items: center; padding: 0 21px 0 28px; color: #51434a; }
.bookmarks .sep { margin-left: 22px; }
.bookmarks .sep.right { margin-left: auto; }
.bm { display: flex; align-items: center; gap: 9px; line-height: 24px; }
.b1 { margin-left: 21px; }
.b2 { margin-left: 24px; gap: 10px; }
.b3 { margin-left: 27px; gap: 10px; }
.b4 { margin-left: 24px; gap: 12px; }

.view { height: 946px; flex: none; display: flex; overflow: hidden; background: #000; }
.page { width: 1897px; height: 946px; overflow: hidden; font-family: "Poppins", "Inter", sans-serif; color: #fff; }
.navbar { height: 140px; border-bottom: 1px solid #5b442d; display: flex; }
.logo { width: 661px; padding: 40px 0 0 132.500px; font-size: 48px; line-height: 60px; font-weight: 700; font-style: italic; display: flex; }
em { color: #b6895b; }
.links { display: flex; gap: 54.500px; padding: 42px 0 0 134.500px; font-size: 31.500px; line-height: 42px; -webkit-text-stroke: .3px #fff; }
.contact h2 { margin: 0; height: 74px; display: flex; gap: 14px; padding-left: 741px; font-size: 62.500px; line-height: 68px; font-weight: 700; }
.contact em { font-style: normal; }
.contact p { margin: 0; padding: 29px 0 0 628px; height: 155px; font-size: 24px; line-height: 39px; font-weight: 200; -webkit-text-stroke: .4px #fff; }
.row { display: flex; padding-left: 34px; height: 577px; }
.map { width: 828px; height: 577px; position: relative; overflow: hidden; font-family: Roboto, sans-serif; }
.lbl { font-family: Roboto, sans-serif; font-size: 20.500px; stroke: #fff; stroke-width: 4px; stroke-linejoin: round; paint-order: stroke; }
.lbl.road { font-size: 17.500px; fill: #3f4c70; stroke-width: 4px; }
.card { position: absolute; left: 15px; top: 15px; width: 408px; height: 200px; background: #fff; border-radius: 3px; box-shadow: 0 1px 4px rgba(0,0,0,.3); display: flex; color: #5b5b5b; font-size: 18px; }
.card a, .route { color: #1a73e8; }
.info { width: 340px; padding-left: 18px; }
.info strong { display: block; margin-top: 15px; line-height: 26px; font-size: 21px; font-weight: 500; color: #000; }
.addr { margin-top: 8px; line-height: 22px; }
.rate { display: flex; align-items: center; margin-top: 9px; height: 24px; }
.score { font-size: 20px; font-weight: 500; }
.rate svg { margin: 0 16px 0 4px; }
.bigger { display: block; margin-top: 15px; line-height: 22px; }
.route { display: flex; flex-direction: column; align-items: flex-start; padding-top: 20px; line-height: 22px; }
.route svg { margin: 0 0 8px 8px; }
.route span { margin-left: 3px; }
.zoom { position: absolute; left: 753px; top: 518px; width: 60px; height: 70px; background: #fff; box-shadow: 0 1px 4px rgba(0,0,0,.3); }
.zoom i { display: block; width: 24px; height: 24px; margin: 18px; background: linear-gradient(#666, #666) 50% 50% / 24px 4px no-repeat, linear-gradient(#666, #666) 50% 50% / 4px 24px no-repeat; }
.form { width: 1001px; background: #222; padding: 168px 48px 0; display: flex; flex-direction: column; gap: 48px; }
.field { height: 145px; flex: none; background: #000; border: 1px solid #fff; padding: 0 0 0 95.500px; font: 42px/141px Arial, "Liberation Sans", sans-serif; color: #757575; }
.scroll { width: 23px; background: #fcfcfc; display: flex; flex-direction: column; align-items: center; padding: 6px 0 5px; }
.scroll svg { margin-left: 1px; }
.thumb { width: 13px; height: 155px; border-radius: 7px; background: #8b8b8b; margin: 649px 0 auto; }

.taskbar { height: 72px; flex: none; background: #eee; border-top: 2px solid #bbb; display: flex; position: relative; color: #1c1c1c; }
.weather { width: 456px; position: relative; padding: 16px 0 0 32px; }
.weather b { position: absolute; left: 46px; top: 9px; width: 24px; height: 24px; border-radius: 50%; background: #c42b1c; color: #fff; font-weight: 400; font-size: 16px; line-height: 23px; text-align: center; }
.apps-row { display: flex; width: 858px; }
.app { width: 66px; position: relative; display: flex; justify-content: center; z-index: 0; }
.ic { margin-top: 16px; height: 36px; }
.start { margin-right: 3px; }
.run { position: absolute; left: 29px; bottom: 7px; width: 8px; height: 5px; border-radius: 3px; background: #858585; }
.app.active::before { content: ""; position: absolute; left: 5px; right: 5px; top: 6px; height: 57px; border-radius: 5px; background: #f9f9f9; border: 1px solid #e5e5e5; z-index: -1; }
.app.active .run { left: 21px; width: 24px; background: #0078d4; }
.badge, .count { position: absolute; left: 35px; top: 9px; width: 24px; height: 24px; border-radius: 50%; background: #ab47bc; color: #fff; font-weight: 400; font-size: 13px; line-height: 24px; text-align: center; }
.badge.photo { background: radial-gradient(circle at 45% 55%, #3c2c20 30%, transparent 55%), linear-gradient(100deg, #9a7a48 35%, #888 60%, #777); }
.count { left: 31px; top: 6px; width: 30px; height: 30px; background: #0078d4; font-size: 16px; line-height: 29px; letter-spacing: -.5px; }
.tray { width: 606px; display: flex; align-items: center; }
.t1 { margin-left: 102px; }
.t2 { margin-left: 35px; }
.t3 { margin-left: 40px; }
.t4 { margin-left: 31px; }
.t5 { margin-left: 23px; }
.t6 { margin-left: 11px; }
.t7 { margin-left: 11px; margin-top: -4px; }
.clock { width: 112px; text-align: right; font-size: 17px; line-height: 24px; margin: -2px 2px 0 6px; }
.bell { margin-left: 11px; }
</style>
